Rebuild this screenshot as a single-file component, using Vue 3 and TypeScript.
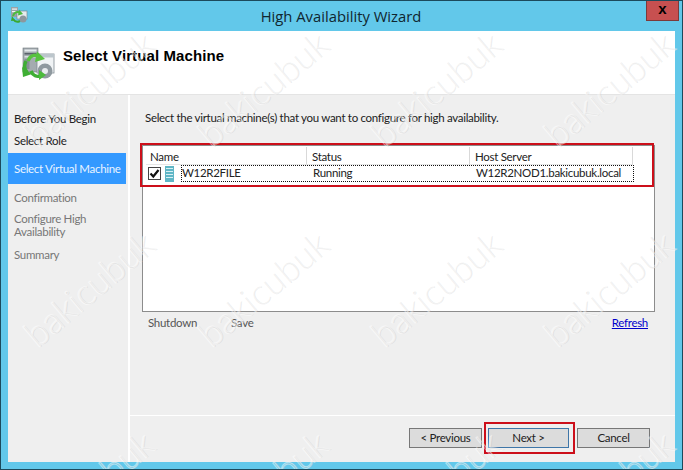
<script setup lang="ts">
interface Step { label: string; kind: string }
const steps: Step[] = [
  { label: 'Before You Begin', kind: 'done first' },
  { label: 'Select Role', kind: 'done second' },
  { label: 'Select Virtual Machine', kind: 'active' },
  { label: 'Confirmation', kind: 'todo third' },
  { label: 'Configure High Availability', kind: 'todo fourth' },
  { label: 'Summary', kind: 'todo fifth' },
]
const marks: [number, number][] = [
  [87, 87], [261, 87], [434, 87], [607, 87],
  [87, 287], [261, 287], [434, 287], [607, 287],
  [87, 487], [261, 487], [434, 487], [607, 487],
]
</script>

<template>
  <div class="win">
    <header class="title">
      <svg class="appicon" width="18" height="18" viewBox="0 0 18 18">
        <rect x="1" y="1" width="7" height="10" fill="#9aa3a8" />
        <rect x="2" y="2.500" width="5" height="1.200" fill="#f2f5f6" />
        <rect x="2" y="5" width="5" height="1.200" fill="#f2f5f6" />
        <rect x="7" y="5" width="10" height="8" fill="#e6ebee" stroke="#7d8a92" stroke-width=".7" />
        <path d="M3 10C4 6 8 5 10 7" fill="none" stroke="#4cbb3c" stroke-width="2" />
        <path d="M9 3.500L13 8 8 9.500z" fill="#4cbb3c" />
        <circle cx="13" cy="13" r="3.500" fill="#8d979d" />
        <path d="M2 10L1 15l4-.500z" fill="#3aa832" />
        <path d="M3 13c2 3 5 3 7 2" fill="none" stroke="#3aa832" stroke-width="2" />
      </svg>
      <span class="title-text">High Availability Wizard</span>
      <div class="close">x</div>
    </header>
    <div class="client">
      <div class="banner">
        <svg class="bigicon" width="34" height="34" viewBox="0 0 34 34">
          <rect x="1" y="1" width="15" height="24" fill="#a4abb0" stroke="#6e777c" stroke-width=".6" />
          <rect x="2.500" y="2.500" width="12" height="2" fill="#e4e9ec" />
          <rect x="2.500" y="6" width="12" height="1.500" fill="#59636a" />
          <rect x="2.500" y="9" width="12" height="1.500" fill="#d9dfe2" />
          <rect x="2.500" y="12" width="5" height="10" fill="#868f95" />
          <rect x="15" y="7" width="17" height="19" fill="#f0f3f5" stroke="#7f8b92" stroke-width=".8" />
          <rect x="15" y="7" width="17" height="3.500" fill="#bcc6cc" />
          <circle cx="23" cy="24" r="7.500" fill="#8f999f" />
          <circle cx="23" cy="24" r="3" fill="#e8ecee" />
          <path d="M6 14C8 8 13 7 17 10" fill="none" stroke="#58c23f" stroke-width="3.500" />
          <path d="M15 4.500L23 12 13 15z" fill="#58c23f" />
          <path d="M4 14C1.500 19 3 23 5 25" fill="none" stroke="#3fae34" stroke-width="3.500" />
          <path d="M0 20L1 30 10 27z" fill="#3fae34" />
          <path d="M9 24C11 29 15 30 18 29" fill="none" stroke="#3fae34" stroke-width="3.500" />
          <path d="M17 23L24 28 17 33z" fill="#4cbb3c" />
        </svg>
        <h1 class="heading">Select Virtual Machine</h1>
      </div>
      <div class="body">
        <nav class="side">
          <div v-for="s in steps" :key="s.label" class="step" :class="s.kind">{{ s.label }}</div>
        </nav>
        <main class="main">
          <div class="content">
            <p class="intro">Select the virtual machine(s) that you want to configure for high availability.</p>
            <div class="list">
              <div class="cols head">
                <div class="hc">Name</div>
                <div class="hc">Status</div>
                <div class="hc">Host Server</div>
              </div>
              <div class="vmrow">
                <span class="check">
                  <svg width="11" height="11" viewBox="0 0 11 11"><path d="M1.500 5.500l2.800 3L9.500 2" fill="none" stroke="#111" stroke-width="2.200" /></svg>
                </span>
                <svg class="vmicon" width="9" height="16" viewBox="0 0 9 16">
                  <rect x="0" y="0" width="9" height="16" fill="#5fb6c6" />
                  <path d="M1 2.500h7M1 5.500h7M1 8.500h7M1 11.500h7" stroke="#d8f0f4" stroke-width="1" />
                </svg>
                <div class="focus">
                  <span class="c1">W12R2FILE</span>
                  <span class="c2">Running</span>
                  <span class="c3">W12R2NOD1.bakicubuk.local</span>
                </div>
              </div>
            </div>
            <div class="actions">
              <span class="act">Shutdown</span>
              <span class="act">Save</span>
              <a class="refresh">Refresh</a>
            </div>
          </div>
          <footer class="foot">
            <button class="btn prev">&lt; Previous</button>
            <button class="btn next">Next &gt;</button>
            <button class="btn cancel">Cancel</button>
          </footer>
        </main>
      </div>
    </div>
    <div class="red redtable"></div>
    <div class="red rednext"></div>
    <span
      v-for="(m, i) in marks"
      :key="i"
      class="mark"
      :style="{ left: m[0] + 'px', top: m[1] + 'px' }"
    >bakicubuk</span>
  </div>
</template>

<style>
html, body { margin: 0; padding: 0; }
</style>

<style scoped>
.win {
  position: relative;
  width: 683px;
  height: 470px;
  overflow: hidden;
  box-sizing: border-box;
  background: #62c8ea;
  border: 1px solid #1c4a5c;
  padding: 0 7px 7px 7px;
  display: flex;
  flex-direction: column;
  font-family: "Lato", "Noto Sans", sans-serif;
  font-size: 11.500px;
  letter-spacing: -.3px;
  color: #222;
}
.title {
  height: 30px;
  flex: none;
  position: relative;
  display: flex;
  align-items: center;
  justify-content: center;
}
.appicon { position: absolute; left: 2px; top: 5px; }
.title-text { font: 14.800px "Open Sans", sans-serif; letter-spacing: 0; color: #10262f; margin-right: 1px; margin-top: -1px; }
.close {
  position: absolute;
  right: -4px;
  top: -1px;
  width: 33px;
  height: 21px;
  box-sizing: border-box;
  background: #c75050;
  border: 1px solid #7c3a3a;
  text-align: center;
  font: bold 15px/15px "Liberation Sans", sans-serif;
  letter-spacing: 0;
  color: #000;
}
.client {
  flex: 1;
  display: flex;
  flex-direction: column;
  background: #fff;
  min-height: 0;
}
.banner {
  height: 63px;
  flex: none;
  border-bottom: 1px solid #e4e4e4;
  position: relative;
  display: flex;
  align-items: flex-start;
  padding-left: 14px;
}
.bigicon { margin-top: 16px; flex: none; }
.heading {
  margin: 15px 0 0 7px;
  font: bold 15px/20px "Liberation Sans", sans-serif;
  letter-spacing: .1px;
  color: #000;
}
.body { flex: 1; display: flex; min-height: 0; }
.side {
  width: 120px;
  flex: none;
  margin-right: 2px;
  background: #efefef;
  padding-top: 17px;
  box-sizing: border-box;
}
.step { padding: 0 6px; line-height: 13px; width: 118px; box-sizing: border-box; }
.done { color: #222; }
.todo { color: #777; }
.second { margin-top: 9px; }
.active {
  margin-top: 6px;
  background: #3399ff;
  color: #e9f4ff;
  height: 31px;
  line-height: 31px;
  white-space: nowrap;
  margin-bottom: 7px;
}
.fourth { margin-top: 8px; }
.fifth { margin-top: 10px; }
.main {
  flex: 1;
  display: flex;
  flex-direction: column;
  background: #efefef;
  min-width: 0;
}
.content { flex: 1; padding: 15px 20px 0 12px; border-bottom: 1px solid #fff; }
.intro { margin: 0 0 19px 3px; line-height: 16px; white-space: nowrap; }
.list {
  height: 167px;
  box-sizing: border-box;
  background: #fff;
  border: 1px solid #8c8c8c;
  padding-top: 1px;
}
.cols { display: flex; padding-left: 3px; }
.head { height: 18px; }
.hc {
  width: 163px;
  box-sizing: border-box;
  padding-left: 5px;
  line-height: 19px;
  border-right: 1px solid #d9d9d9;
  border-bottom: 1px solid #e6e6e6;
}
.hc:first-child { width: 161px; padding-left: 4px; }
.vmrow { display: flex; align-items: center; height: 17px; padding-left: 5px; }
.check {
  width: 11px;
  height: 11px;
  border: 1px solid #444;
  background: #fff;
  display: flex;
  flex: none;
}
.vmicon { margin-left: 4px; flex: none; }
.focus {
  margin-left: 7px;
  width: 453px;
  height: 17px;
  box-sizing: border-box;
  border: 1px dotted #111;
  display: flex;
  line-height: 14px;
}
.c1 { width: 131px; flex: none; }
.c2 { width: 163px; flex: none; }
.c3 { flex: none; }
.actions {
  display: flex;
  margin-top: 3px;
  padding: 0 6px 0 6px;
  line-height: 16px;
  color: #555;
}
.act:first-child { width: 83px; }
.refresh { margin-left: auto; margin-right: 1px; color: #0000cc; text-decoration: underline; }
.foot {
  height: 46px;
  flex: none;
  display: flex;
  justify-content: flex-end;
  padding: 12px 25px 0 0;
  box-sizing: border-box;
}
.btn {
  height: 20px;
  padding: 0;
  width: 73px;
  background: #dcdcdc;
  border: 1px solid #777;
  font: inherit;
  letter-spacing: inherit;
  color: #222;
  line-height: 18px;
}
.next { width: 81px; margin-left: 6px; border-color: #3f76a8; }
.cancel { margin-left: 8px; }
.red { position: absolute; box-sizing: border-box; border: 2px solid #cc0f1a; }
.redtable { left: 139px; top: 142px; width: 514px; height: 44px; }
.rednext { left: 483px; top: 421px; width: 91px; height: 32px; }
.mark {
  position: absolute;
  transform: translate(-50%, -50%) rotate(-40deg);
  font: 300 36px "Lato", sans-serif;
  letter-spacing: 0;
  color: transparent;
  -webkit-text-stroke: 1px rgba(255, 255, 255, .5);
  text-shadow: 1px 1px 0 rgba(190, 190, 190, .3);
  white-space: nowrap;
  pointer-events: none;
}
</style>
